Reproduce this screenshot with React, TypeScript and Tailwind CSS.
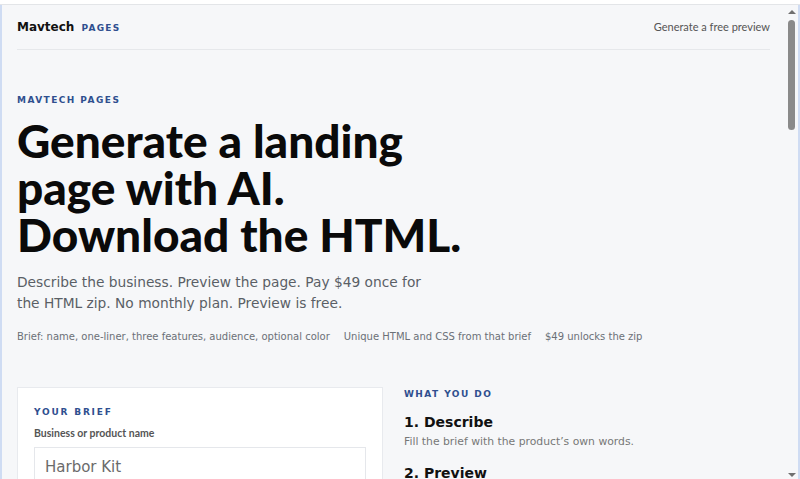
const sans = "font-['DejaVu_Sans',sans-serif]";
const geo = "font-['Lato',sans-serif]";

const chips = [
  "Brief: name, one-liner, three features, audience, optional color",
  "Unique HTML and CSS from that brief",
  "$49 unlocks the zip",
];

function Scrollbar() {
  return (
    <div className="w-[13px] flex flex-col items-center pt-[5px] pb-[2px]">
      <div className="w-0 h-0 border-x-[4px] border-x-transparent border-b-[4px] border-b-[#707070]" />
      <div className="mt-[6px] w-[7px] h-[110px] rounded-full bg-[#8a8a8a]" />
      <div className="flex-1" />
      <div className="w-0 h-0 border-x-[4px] border-x-transparent border-t-[4px] border-t-[#707070]" />
    </div>
  );
}

export default function App() {
  return (
    <div className="w-[800px] h-[479px] overflow-hidden bg-[#f6f7f9] flex flex-col">
      <div className="h-[5px] bg-white border-b border-[#e3e5e8]" />
      <div className="flex-1 flex min-h-0">
        <div className="w-[2px] bg-[#cfdcf3]" />
        <main className="flex-1 px-[15px] overflow-hidden">
          {/* Header */}
          <header className="h-[45px] flex items-center justify-between border-b border-[#e6e8eb]">
            <div className="flex items-baseline gap-[7px]">
              <span className={`${sans} text-[12px] font-bold text-[#111]`}>Mavtech</span>
              <span className={`${sans} text-[9px] font-bold tracking-[0.14em] text-[#2f4f8f]`}>PAGES</span>
            </div>
            <span className={`${geo} text-[11px] text-[#555]`}>Generate a free preview</span>
          </header>

          {/* Hero */}
          <section className="pt-[44px]">
            <p className={`${sans} text-[9px] leading-[12px] font-bold tracking-[0.16em] text-[#2f4f8f]`}>
              MAVTECH PAGES
            </p>
            <h1 className={`${geo} mt-[11px] text-[46px] leading-[47px] font-black text-[#0a0a0a]`}>
              Generate a landing
              <br />
              page with AI.
              <br />
              Download the HTML.
            </h1>
            <p className={`${sans} mt-[14px] text-[13.75px] leading-[21px] text-[#5a5f66]`}>
              Describe the business. Preview the page. Pay $49 once for
              <br />
              the HTML zip. No monthly plan. Preview is free.
            </p>
            <div className="mt-[15px] flex gap-[14px]">
              {chips.map((c) => (
                <span key={c} className={`${sans} text-[10px] leading-[16px] text-[#6b7077]`}>
                  {c}
                </span>
              ))}
            </div>
          </section>

          {/* Brief + steps */}
          <section className="mt-[42px] grid grid-cols-2 gap-[21px] items-start">
            <div className="bg-white border border-[#e8eaee] px-[16px] pt-[18px] pb-4">
              <p className={`${sans} text-[9px] leading-[12px] font-bold tracking-[0.2em] text-[#2f4f8f]`}>
                YOUR BRIEF
              </p>
              <label className={`${geo} block mt-[8px] text-[10.5px] font-bold text-[#555]`}>
                Business or product name
              </label>
              <div className="mt-[5px] h-[44px] border border-[#e5e7eb] px-[10px] pt-[6px]">
                <span className={`${sans} text-[15px] leading-[18px] text-[#6b6b6b]`}>Harbor Kit</span>
              </div>
            </div>
            <div className="pt-[1px]">
              <p className={`${sans} text-[9px] leading-[12px] font-bold tracking-[0.16em] text-[#2f4f8f]`}>
                WHAT YOU DO
              </p>
              <h3 className={`${sans} mt-[13px] text-[14px] leading-[18px] font-bold text-[#111]`}>1. Describe</h3>
              <p className={`${sans} mt-[3px] text-[10.8px] leading-[16px] text-[#777]`}>
                Fill the brief with the product’s own words.
              </p>
              <h3 className={`${sans} mt-[14px] text-[14px] leading-[18px] font-bold text-[#111]`}>2. Preview</h3>
            </div>
          </section>
        </main>
        <Scrollbar />
        <div className="w-[2px] bg-[#cfdcf3]" />
      </div>
    </div>
  );
}
